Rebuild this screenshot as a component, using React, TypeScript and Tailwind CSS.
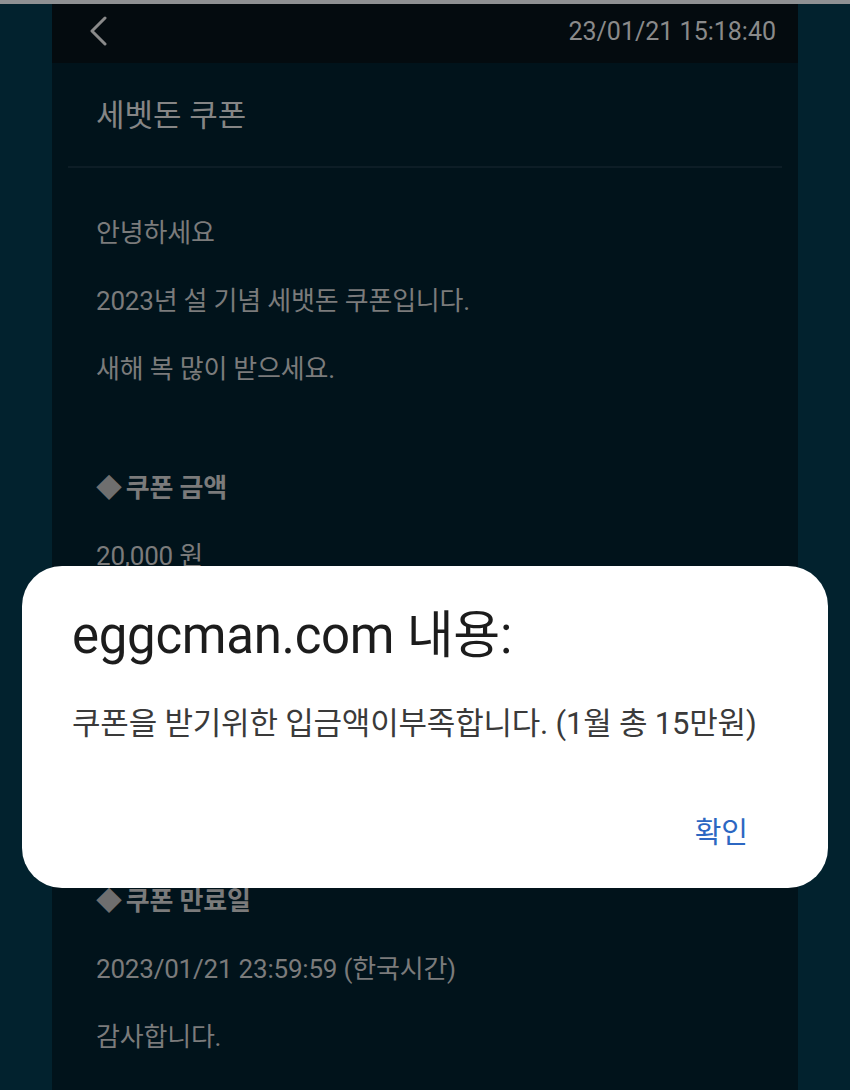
import React from 'react';

const font = "font-['Roboto','Noto_Sans_CJK_KR',sans-serif]";

const Row: React.FC<{ children: React.ReactNode; bold?: boolean }> = ({ children, bold }) => (
  <div className={`h-[68px] flex items-center text-[26px] tracking-[-0.2px] text-[#7b7b7b] ${bold ? 'font-bold' : ''}`}>
    {children}
  </div>
);

const App: React.FC = () => {
  return (
    <div className={`relative w-[850px] h-[1090px] overflow-hidden bg-[#02222e] border-t-4 border-[#8f9193] ${font}`}>
      <div className="mx-[52px] h-full bg-[#01131b]">
        {/* top bar */}
        <div className="h-[59px] bg-[#040b0f] flex items-center justify-between pl-[36px] pr-[22px]">
          <svg width="22" height="30" viewBox="0 0 22 30" fill="none" className="-mt-[6px]">
            <polyline points="17,2 4,15 17,28" stroke="#8a8a8a" strokeWidth="3" strokeLinecap="round" strokeLinejoin="round" />
          </svg>
          <span className="text-[25px] text-[#8a8a8a] -mt-[4px]">23/01/21 15:18:40</span>
        </div>

        {/* title */}
        <div className="pt-[33px] pb-[30px] px-[44px]">
          <h1 className="text-[31px] leading-[40px] text-[#858585]">세벳돈 쿠폰</h1>
        </div>
        <div className="mx-[16px] h-[2px] bg-[#0d1d26]" />

        {/* body */}
        <div className="px-[44px] pt-[31px]">
          <Row>안녕하세요</Row>
          <Row>2023년 설 기념 세뱃돈 쿠폰입니다.</Row>
          <Row>새해 복 많이 받으세요.</Row>
          <div className="h-[51px]" />
          <Row bold>
            <span className="text-[#6f6f6f] mr-[4px]">◆</span>쿠폰 금액
          </Row>
          <Row>20,000 원</Row>
          <div className="h-[277px]" />
          <Row bold>
            <span className="text-[#6f6f6f] mr-[4px]">◆</span>쿠폰 만료일
          </Row>
          <Row>2023/01/21 23:59:59 (한국시간)</Row>
          <Row>감사합니다.</Row>
        </div>
      </div>

      {/* alert dialog */}
      <div className="absolute left-[22px] top-[562px] w-[806px] h-[322px] rounded-[40px] bg-white pt-[40px] pl-[50px] pr-[80px]">
        <h2 className="text-[51px] leading-[60px] text-[#1c1c1c] tracking-[-0.3px]">eggcman.com 내용:</h2>
        <p className="mt-[38px] text-[31px] leading-[40px] text-[#3a3a3a] tracking-[-0.2px] whitespace-nowrap">
          쿠폰을 받기위한 입금액이부족합니다. (1월 총 15만원)
        </p>
        <div className="mt-[69px] flex justify-end">
          <button className="text-[29px] leading-[40px] text-[#2c67c2]">확인</button>
        </div>
      </div>
    </div>
  );
};

export default App;
